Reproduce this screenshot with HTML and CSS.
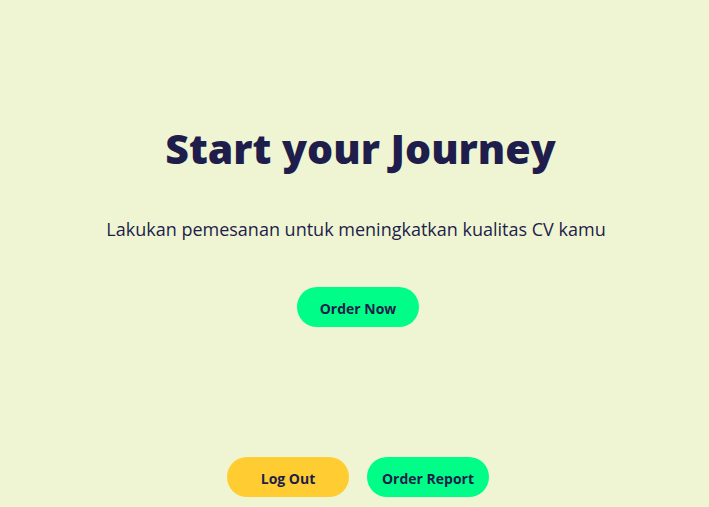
FILE: index.html
```html
<!DOCTYPE html>
<html lang="id">
<head>
<meta charset="utf-8">
<title>Start your Journey</title>
<link rel="stylesheet" href="styles.css">
</head>
<body>
<div class="page">
  <main class="hero">
    <h1 class="title">Start your Journey</h1>
    <p class="subtitle">Lakukan pemesanan untuk meningkatkan kualitas CV kamu</p>
    <a class="btn btn-green" href="#">Order Now</a>
  </main>
  <footer class="actions">
    <a class="btn btn-yellow" href="#">Log Out</a>
    <a class="btn btn-green" href="#">Order Report</a>
  </footer>
</div>
</body>
</html>
```
FILE: styles.css
```css
html, body {
  margin: 0;
  padding: 0;
  height: 100%;
}
body {
  background: #eff5d2;
  color: #1e1d4b;
  font-family: "Open Sans", "Liberation Sans", sans-serif;
}
.page {
  min-height: 100vh;
  display: flex;
  flex-direction: column;
  align-items: center;
  box-sizing: border-box;
  padding: 0 0 10px 7px;
}
.hero {
  display: flex;
  flex-direction: column;
  align-items: center;
  padding-top: 123px;
}
.title {
  margin: 0;
  padding-left: 5px;
  font-size: 41px;
  line-height: 50px;
  font-weight: 800;
  color: #1e1d4b;
}
.subtitle {
  margin: 43px 0 0;
  padding-right: 4px;
  font-size: 18px;
  line-height: 27px;
  font-weight: 400;
}
.hero .btn {
  margin-top: 44px;
}
.btn {
  display: flex;
  align-items: center;
  justify-content: center;
  box-sizing: border-box;
  width: 122px;
  height: 40px;
  padding-top: 2px;
  border-radius: 20px;
  font-size: 14px;
  font-weight: 700;
  color: #1e1d4b;
  text-decoration: none;
}
.btn-green {
  background: #00fd87;
}
.btn-yellow {
  background: #ffcd31;
}
.actions {
  margin-top: auto;
  display: flex;
  gap: 18px;
}
```
